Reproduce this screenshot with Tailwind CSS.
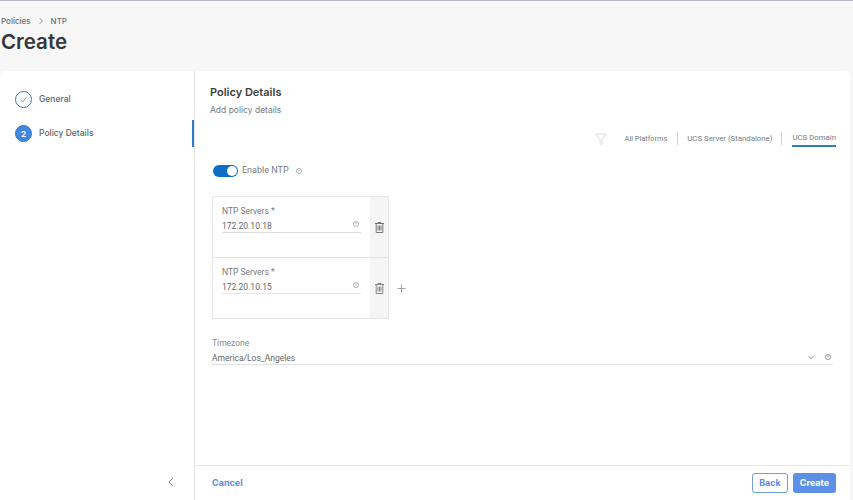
<!DOCTYPE html>
<html lang="en">
<head>
<meta charset="UTF-8" />
<title>Create NTP Policy</title>
<script src="https://cdn.jsdelivr.net/npm/@tailwindcss/browser@4"></script>
</head>
<body class="bg-[#f7f7f7] font-['Inter',sans-serif]">
<div class="w-[853px] h-[500px] overflow-hidden flex flex-col border-t border-[#b4b8c8]">
	<!-- header -->
	<div class="h-[70px] shrink-0 pl-[1px]">
		<div class="flex items-center gap-[7px] pt-[12px] h-[28px] text-[8px] text-[#6b6f73] font-medium">
			<span>Policies</span>
			<svg width="6" height="8" viewBox="0 0 6 8" fill="none" stroke="#777" stroke-width="0.8"><path d="M1.5 1 L4.5 4 L1.5 7" /></svg>
			<span>NTP</span>
		</div>
		<h1 class="text-[20.5px] leading-[26px] font-semibold text-[#33373a]">Create</h1>
	</div>

	<!-- card -->
	<div class="w-[850px] flex-1 bg-white rounded-t-[5px] flex min-h-0">
		<!-- sidebar -->
		<div class="w-[195px] shrink-0 border-r border-[#e4e4e4] relative flex flex-col">
			<div class="flex-1 pt-[20px] pl-[15px] flex flex-col gap-[17px]">
				<div class="flex items-center gap-[7px] h-[17px]">
					<svg width="17" height="17" viewBox="0 0 17 17" fill="none" stroke="#2f7bc4"><circle cx="8.5" cy="8.5" r="8" /><path d="M5.5 8.7 L7.7 10.8 L11.6 6.4" stroke-width="0.8" /></svg>
					<span class="text-[8.5px] font-medium text-[#5f6367]">General</span>
				</div>
				<div class="flex items-center gap-[7px] h-[17px]">
					<div class="w-[17px] h-[17px] rounded-full bg-[#3f87e0] border border-[#2f7bc4] flex items-center justify-center text-white text-[8px] font-bold">2</div>
					<span class="text-[8.5px] font-medium text-[#5f6367]">Policy Details</span>
				</div>
			</div>
			<div class="absolute left-[192px] top-[49px] w-[2px] h-[27px] bg-[#2f7bc4]"></div>
			<div class="h-[34px] flex justify-end items-center pr-[20px] pb-[2px]">
				<svg width="6" height="10" viewBox="0 0 6 10" fill="none" stroke="#8b8f93"><path d="M5 1 L1 5 L5 9" /></svg>
			</div>
		</div>

		<!-- main -->
		<div class="flex-1 flex flex-col min-w-0">
			<div class="flex-1 pl-[17px] pr-[14px] pt-[15px]">
				<div class="-ml-[2px] text-[11px] leading-[13px] font-semibold text-[#3c4043]">Policy Details</div>
				<div class="-ml-[2px] text-[8.5px] leading-[11px] mt-[6px] text-[#777b7f]">Add policy details</div>

				<div class="flex justify-end items-center h-[17px] mt-[14px] font-['Roboto',sans-serif] text-[7.8px] text-[#777b7f]">
					<svg class="mr-[18px]" width="12" height="12" viewBox="0 0 12 12" fill="none" stroke="#dcdcdc"><path d="M1 1 H11 L7 6.5 V11 H5 V6.5 Z" /></svg>
					<span class="pr-[10px] border-r border-[#cfcfcf] h-[13px] leading-[13px] text-[7.4px]">All Platforms</span>
					<span class="px-[9px] border-r border-[#cfcfcf] h-[13px] leading-[13px]">UCS Server (Standalone)</span>
					<span class="ml-[10px] h-[16px] leading-[14px] border-b-2 border-[#2f7bc4]">UCS Domain</span>
				</div>

				<div class="flex items-center h-[13px] mt-[17px] font-['Roboto',sans-serif]">
					<div class="ml-[1px] w-[25px] h-[12px] rounded-full bg-[#0d6fc4] flex justify-end items-center pr-[1px]">
						<div class="w-[10px] h-[10px] rounded-full bg-white"></div>
					</div>
					<span class="ml-[4px] text-[9px] text-[#777b7f]">Enable NTP</span>
					<svg class="ml-[7px]" width="6" height="6" viewBox="0 0 6 6" fill="none" stroke="#8b8f93" stroke-width="0.7"><circle cx="3" cy="3" r="2.5" /><path d="M3 1.5 V3.4" /></svg>
				</div>

				<!-- ntp servers -->
				<div class="flex items-center mt-[19px] font-['Roboto',sans-serif]">
					<div class="w-[177px] border border-[#e6e6e6]">
						<div class="flex h-[61px] border-b border-[#e2e2e2]">
							<div class="w-[157px] pl-[9px] pr-[9px] pt-[9px]">
								<div class="text-[8.5px] leading-[11px] text-[#777b7f]">NTP Servers *</div>
								<div class="flex justify-between items-center h-[14px] pt-[2px] mt-[2px] border-b border-[#dedede] text-[8.5px] text-[#63676b]">
									<span>172.20.10.18</span>
									<svg class="mb-[5px] mr-[2px]" width="6" height="6" viewBox="0 0 6 6" fill="none" stroke="#8b8f93" stroke-width="0.7"><circle cx="3" cy="3" r="2.5" /><path d="M3 1.5 V3.4" /></svg>
								</div>
							</div>
							<div class="flex-1 bg-[#f5f5f5] flex justify-center pt-[25px]">
								<svg width="9" height="11" viewBox="0 0 9 11" fill="none" stroke="#55595c" stroke-width="0.8"><path d="M0 1.5 H9 M3 1.5 V0.5 H6 V1.5 M1.2 1.5 V10.5 H7.8 V1.5 M3 3.5 V8.5 M4.5 3.5 V8.5 M6 3.5 V8.5" /></svg>
							</div>
						</div>
						<div class="flex h-[60px]">
							<div class="w-[157px] pl-[9px] pr-[9px] pt-[9px]">
								<div class="text-[8.5px] leading-[11px] text-[#777b7f]">NTP Servers *</div>
								<div class="flex justify-between items-center h-[14px] pt-[2px] mt-[2px] border-b border-[#e8e8e8] text-[8.5px] text-[#63676b]">
									<span>172.20.10.15</span>
									<svg class="mb-[5px] mr-[2px]" width="6" height="6" viewBox="0 0 6 6" fill="none" stroke="#8b8f93" stroke-width="0.7"><circle cx="3" cy="3" r="2.5" /><path d="M3 1.5 V3.4" /></svg>
								</div>
							</div>
							<div class="flex-1 bg-[#f5f5f5] flex justify-center pt-[25px]">
								<svg width="9" height="11" viewBox="0 0 9 11" fill="none" stroke="#6b6f73" stroke-width="0.8"><path d="M0 1.5 H9 M3 1.5 V0.5 H6 V1.5 M1.2 1.5 V10.5 H7.8 V1.5 M3 3.5 V8.5 M4.5 3.5 V8.5 M6 3.5 V8.5" /></svg>
							</div>
						</div>
					</div>
					<svg class="ml-[8px] mt-[62px]" width="9" height="9" viewBox="0 0 9 9" fill="none" stroke="#8b8f93" stroke-width="0.8"><path d="M4.5 0.5 V8.5 M0.5 4.5 H8.5" /></svg>
				</div>

				<!-- timezone -->
				<div class="mt-[19px] pr-[3px] font-['Roboto',sans-serif]">
					<div class="text-[8.5px] leading-[11px] text-[#85898d]">Timezone</div>
					<div class="flex justify-between items-center h-[14px] pt-[1px] mt-[2px] border-b border-[#e2e2e2] text-[8.5px] text-[#63676b]">
						<span>America/Los_Angeles</span>
						<div class="flex items-center gap-[11px] pr-[2px] mb-[2px]">
							<svg width="6" height="5" viewBox="0 0 6 5" fill="none" stroke="#8b8f93" stroke-width="0.8"><path d="M0.5 1 L3 4 L5.5 1" /></svg>
							<svg width="6" height="6" viewBox="0 0 6 6" fill="none" stroke="#6b6f73" stroke-width="0.7"><circle cx="3" cy="3" r="2.5" /><path d="M3 1.5 V3.4" /></svg>
						</div>
					</div>
				</div>
			</div>

			<!-- footer -->
			<div class="h-[35px] shrink-0 border-t border-[#e8e8e8] flex items-center justify-between pl-[17px] pr-[14px] text-[9px] font-bold">
				<span class="text-[#5a8ce0]">Cancel</span>
				<div class="flex gap-[5px]">
					<button class="w-[36px] h-[20px] rounded-[3px] border border-[#6fa0d8] bg-white text-[#5a8ce0] font-bold">Back</button>
					<button class="w-[43px] h-[20px] rounded-[3px] bg-[#5b90e6] text-white font-bold">Create</button>
				</div>
			</div>
		</div>
	</div>
</div>
</body>
</html>
